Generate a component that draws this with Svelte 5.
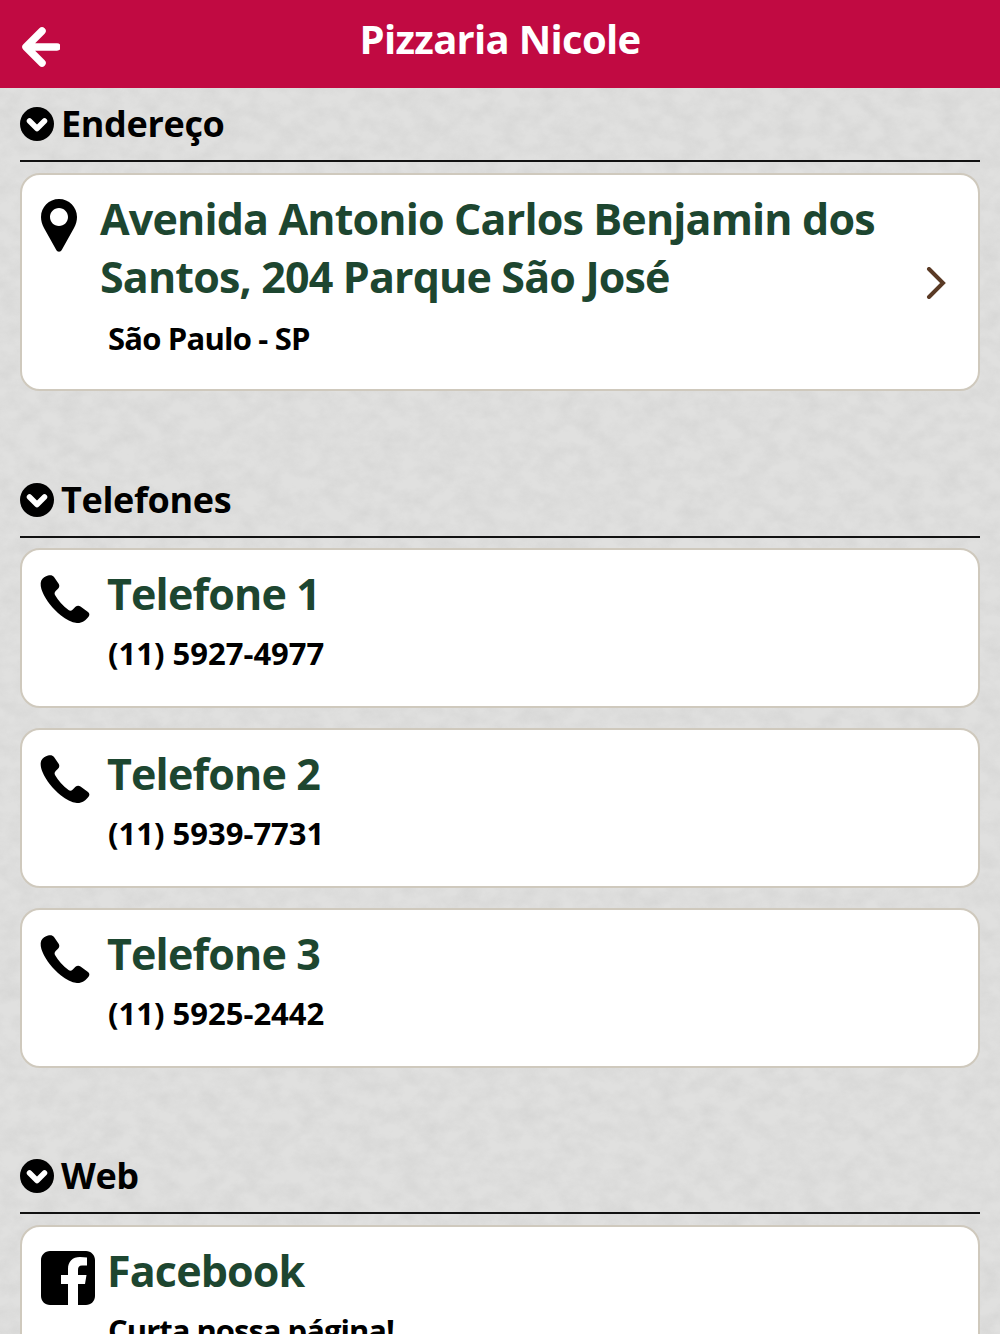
<script>
  const phones = [
    { name: "Telefone 1", number: "(11) 5927-4977" },
    { name: "Telefone 2", number: "(11) 5939-7731" },
    { name: "Telefone 3", number: "(11) 5925-2442" }
  ];
</script>

{#snippet heading(label)}
  <div class="heading">
    <svg class="chev" viewBox="0 0 34 34" width="34" height="34" aria-hidden="true">
      <circle cx="17" cy="17" r="17" fill="#000" />
      <path d="M9.5 14 L17 21.500 L24.500 14" fill="none" stroke="#fff" stroke-width="5.500" stroke-linecap="round" stroke-linejoin="round" />
    </svg>
    <h2>{label}</h2>
  </div>
{/snippet}

{#snippet phoneIcon()}
  <svg class="icon" viewBox="0 0 50 50" width="50" height="50" aria-hidden="true">
    <path d="M8 1.500 C5.500 2 2.500 4 1.300 6.500 C0 9.500 0.800 14 2.500 18 C6 26.500 13 35 21 41.500 C26 45.500 31.500 48.500 37 49 C41.500 49.300 46 46.500 48.700 42.500 C49.800 40.800 49.500 39.300 48 38 L40.500 32.500 C38.800 31.300 37 31.500 35.500 32.800 L32.500 35.800 C31.300 37 29.800 37 28.500 36 C23 32 18 26.500 15 21 C14.300 19.500 14.500 18.200 15.700 17 L18 14.800 C19.300 13.500 19.700 11.800 18.800 10 L14 3 C12.500 1 10.500 1 8 1.500 Z" fill="#000" />
  </svg>
{/snippet}

<svg class="paper" width="1000" height="1334" aria-hidden="true">
  <filter id="grain" x="0" y="0" width="100%" height="100%">
    <feTurbulence type="fractalNoise" baseFrequency="0.05 0.065" numOctaves="6" seed="7" />
    <feColorMatrix type="matrix" values="0 0 0 0 0.45  0 0 0 0 0.45  0 0 0 0 0.45  1.2 0 0 0 -0.38" />
  </filter>
  <rect width="1000" height="1334" fill="#e0e0df" />
  <rect width="1000" height="1334" filter="url(#grain)" opacity="0.28" />
</svg>

<div class="page">
  <header class="bar">
    <svg class="back" viewBox="0 0 38 40" width="38" height="40" aria-hidden="true">
      <path d="M20 4 L4 20 L20 36 M5 20 L35 20" fill="none" stroke="#fff" stroke-width="7.500" stroke-linecap="round" stroke-linejoin="round" />
    </svg>
    <h1>Pizzaria Nicole</h1>
  </header>

  <section class="first">
    {@render heading("Endereço")}
    <div class="card address">
      <svg class="icon pin" viewBox="0 0 36 54" width="36" height="54" aria-hidden="true">
        <path fill-rule="evenodd" d="M18 0 C8 0 0 8 0 18 C0 22 1 25 3 29 L15 50.500 C16.500 53.500 19.500 53.500 21 50.500 L33 29 C35 25 36 22 36 18 C36 8 28 0 18 0 Z M18 9 C23 9 27 13 27 18 C27 23 23 27 18 27 C13 27 9 23 9 18 C9 13 13 9 18 9 Z" fill="#000" />
      </svg>
      <div class="address-text">
        <p class="title">Avenida Antonio Carlos Benjamin dos Santos, 204 Parque São José</p>
        <p class="sub">São Paulo - SP</p>
      </div>
      <svg class="arrow" viewBox="0 0 20 32" width="20" height="32" aria-hidden="true">
        <path d="M3 2 L17 16 L3 30" fill="none" stroke="#5a3a25" stroke-width="4" stroke-linecap="round" stroke-linejoin="miter" />
      </svg>
    </div>
  </section>

  <section>
    {@render heading("Telefones")}
    <div class="list">
      {#each phones as phone}
        <div class="card row">
          {@render phoneIcon()}
          <div>
            <p class="title">{phone.name}</p>
            <p class="sub">{phone.number}</p>
          </div>
        </div>
      {/each}
    </div>
  </section>

  <section>
    {@render heading("Web")}
    <div class="card row">
      <svg class="icon fb" viewBox="0 0 54 54" width="54" height="54" aria-hidden="true">
        <path fill-rule="evenodd" d="M9 0 H45 C50 0 54 4 54 9 V45 C54 50 50 54 45 54 H37 V33 H44 L45.500 24 H37 V19 C37 16 38 14.500 41 14.500 H46 V6.500 C44 6.200 41.500 6 39 6 C31.500 6 27 10.500 27 18 V24 H20 V33 H27 V54 H9 C4 54 0 50 0 45 V9 C0 4 4 0 9 0 Z" fill="#000" />
      </svg>
      <div>
        <p class="title">Facebook</p>
        <p class="sub tight">Curta nossa página!</p>
      </div>
    </div>
  </section>
</div>

<style>
  :global(body) {
    margin: 0;
    height: 1334px;
    overflow: hidden;
    background: #e0e0df;
    font-family: "Open Sans", "Liberation Sans", sans-serif;
  }

  .paper {
    position: absolute;
    top: 0;
    left: 0;
  }

  .page {
    position: relative;
    height: 1334px;
    overflow: hidden;
  }

  .bar {
    position: relative;
    height: 88px;
    background: #c10a42;
    display: flex;
    justify-content: center;
  }

  .bar h1 {
    margin: 0;
    padding-top: 13px;
    color: #fff;
    font-size: 40px;
    line-height: 52px;
    font-weight: 700;
    letter-spacing: -0.7px;
  }

  .back {
    position: absolute;
    left: 22px;
    top: 27px;
  }

  section {
    padding: 0 20px;
    margin-top: 73px;
  }

  section.first {
    margin-top: 0;
  }

  .heading {
    display: flex;
    align-items: center;
    gap: 7px;
    height: 74px;
    box-sizing: border-box;
    border-bottom: 2px solid #111;
  }

  .heading h2 {
    margin: 0;
    color: #000;
    font-size: 36px;
    line-height: 44px;
    font-weight: 700;
    letter-spacing: -0.35px;
  }

  .list {
    display: flex;
    flex-direction: column;
    gap: 20px;
    margin-top: 10px;
    margin-bottom: -1px;
  }

  .card {
    margin-top: 11px;
    box-sizing: border-box;
    background: #fff;
    border: 2px solid #cfc9bd;
    border-radius: 20px;
    height: 160px;
    padding: 15px 18px;
    display: flex;
  }

  .list .card {
    margin-top: 0;
  }

  .address {
    height: 218px;
    position: relative;
  }

  .icon {
    flex: none;
    margin-right: 17px;
    margin-top: 9px;
  }

  .pin {
    margin-left: 1px;
    margin-right: 23px;
  }

  .fb {
    margin-left: 1px;
    margin-right: 12px;
  }

  .title {
    margin: 0;
    color: #1d4630;
    font-size: 43px;
    line-height: 58px;
    font-weight: 700;
    letter-spacing: -0.85px;
  }

  .sub {
    margin: 3px 0 0;
    padding-left: 1px;
    color: #000;
    font-size: 31px;
    line-height: 54px;
    font-weight: 700;
    letter-spacing: 0;
  }

  .sub.tight {
    letter-spacing: -1px;
  }

  .address-text {
    width: 810px;
  }

  .address .sub {
    margin-top: 5px;
    padding-left: 8px;
    letter-spacing: -0.8px;
  }

  .arrow {
    position: absolute;
    right: 32px;
    top: 92px;
  }
</style>
